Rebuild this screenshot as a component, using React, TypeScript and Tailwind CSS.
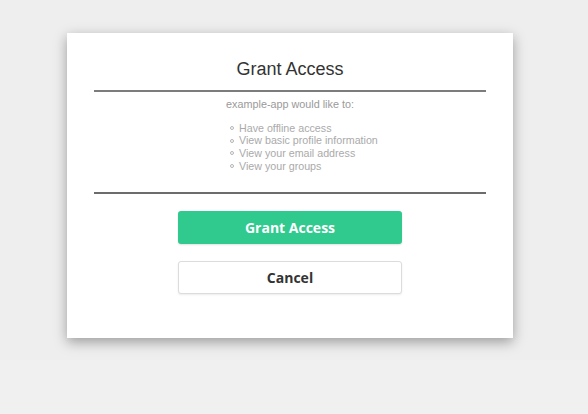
export default function App() {
  const items = [
    "Have offline access",
    "View basic profile information",
    "View your email address",
    "View your groups",
  ];
  return (
    <div className="h-[414px] w-full bg-[#f0f0f0]">
      <div className="h-[360px] w-full bg-[#eeeeee] pt-[33px]">
        <div className="ml-[67px] w-[446px] bg-white shadow-[0_4px_12px_rgba(0,0,0,0.35)] px-[27px] pt-[25px] pb-[44px]">
          <h1
            className="text-center text-[18px] leading-[22px] text-[#333]"
            style={{ fontFamily: '"Liberation Sans", Arial, sans-serif' }}
          >
            Grant Access
          </h1>
          <div className="mt-[10px] h-[2px] bg-[#7c7c7c]" />
          <div style={{ fontFamily: '"Liberation Sans", Arial, sans-serif' }}>
            <p className="mt-[6px] text-center text-[10.8px] leading-[12.65px] text-[#9a9a9a]">
              example-app would like to:
            </p>
            <ul className="mt-[11px] ml-[136px] flex flex-col">
              {items.map((t) => (
                <li
                  key={t}
                  className="flex items-center text-[10.7px] leading-[12.65px] text-[#aaaaaa]"
                >
                  <span className="mr-[5px] inline-block h-[4px] w-[4px] rounded-full border border-[#b5b5b5]" />
                  {t}
                </li>
              ))}
            </ul>
          </div>
          <div className="mt-[20px] h-[2px] bg-[#6c6c6c]" />
          <div
            className="mt-[17px] flex flex-col items-center gap-[17px]"
            style={{ fontFamily: '"Open Sans", sans-serif' }}
          >
            <button className="h-[33px] w-[224px] rounded-[3px] bg-[#30c98e] text-[14px] font-bold text-white shadow-[0_1px_2px_rgba(0,0,0,0.12)]">
              Grant Access
            </button>
            <button className="h-[33px] w-[224px] rounded-[3px] border border-[#dcdcdc] bg-white text-[14px] font-bold text-[#333] shadow-[0_1px_2px_rgba(0,0,0,0.08)]">
              Cancel
            </button>
          </div>
        </div>
      </div>
    </div>
  );
}
